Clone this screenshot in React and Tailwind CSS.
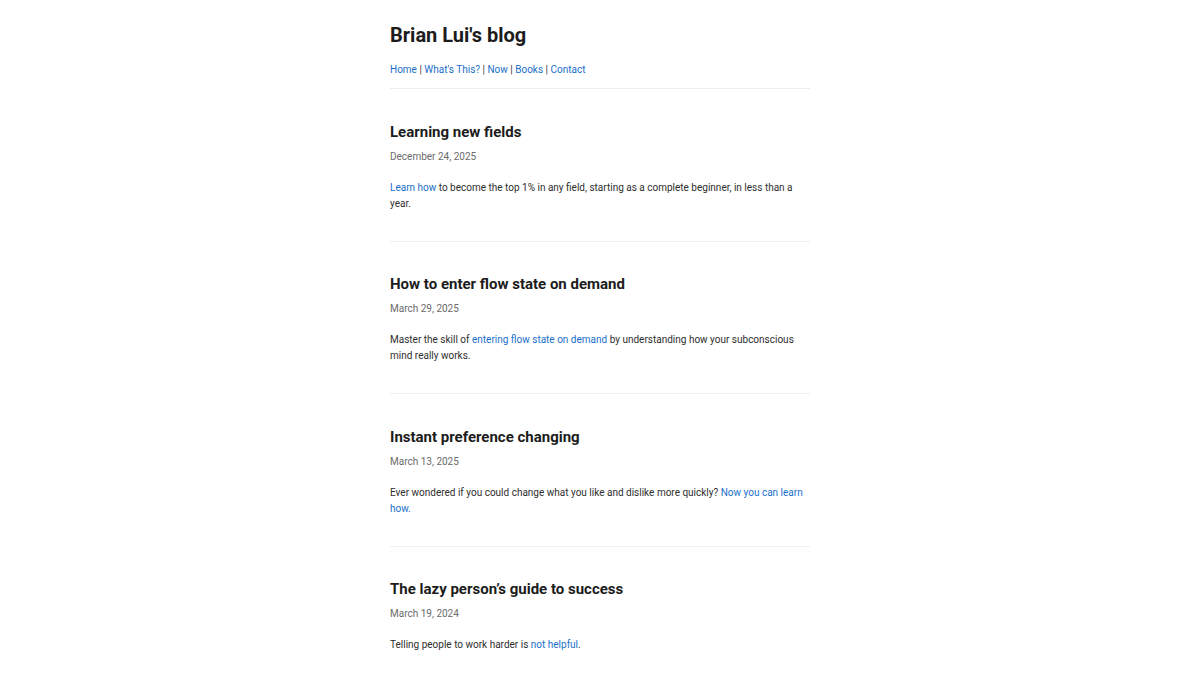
const posts = [
  {
    title: "Learning new fields",
    date: "December 24, 2025",
    body: (
      <>
        <a href="#" className="text-[#1a6fc9]">Learn how</a> to become the top 1% in any field, starting as a complete beginner, in less than a year.
      </>
    ),
  },
  {
    title: "How to enter flow state on demand",
    date: "March 29, 2025",
    body: (
      <>
        Master the skill of <a href="#" className="text-[#1a6fc9]">entering flow state on demand</a> by understanding how your subconscious mind really works.
      </>
    ),
  },
  {
    title: "Instant preference changing",
    date: "March 13, 2025",
    body: (
      <>
        Ever wondered if you could change what you like and dislike more quickly? <a href="#" className="text-[#1a6fc9]">Now you can learn how.</a>
      </>
    ),
  },
  {
    title: "The lazy person\u2019s guide to success",
    date: "March 19, 2024",
    body: (
      <>
        Telling people to work harder is <a href="#" className="text-[#1a6fc9]">not helpful</a>.
      </>
    ),
  },
];

const nav = ["Home", "What's This?", "Now", "Books", "Contact"];

export default function App() {
  return (
    <div className="min-h-screen bg-white font-['Roboto',sans-serif] text-[#1f1f1f]">
      <div className="w-[420px] mx-auto">
        {/* Header */}
        <header className="pt-[23px] pb-[10px] border-b border-[#ececec]">
          <h1 className="text-[20px] leading-[24px] font-bold text-[#1c1c1c]">Brian Lui's blog</h1>
          <nav className="mt-[15px] text-[10px] leading-[16px]">
            {nav.map((item, i) => (
              <span key={item}>
                {i > 0 && <span className="text-[#333]"> | </span>}
                <a href="#" className="text-[#1a6fc9]">{item}</a>
              </span>
            ))}
          </nav>
        </header>

        {/* Posts */}
        {posts.map((post, i) => (
          <article
            key={post.title}
            className={
              i < posts.length - 1
                ? "pt-[32.5px] pb-[29px] border-b border-[#f0f0f0]"
                : "pt-[32.5px] pb-[29px]"
            }
          >
            <h2 className="text-[15px] leading-[20px] font-bold text-[#1c1c1c]">{post.title}</h2>
            <p className="mt-[7px] text-[10px] leading-[16px] text-[#6b6b6b]">{post.date}</p>
            <p className="mt-[15px] text-[10px] leading-[16px] text-[#2e2e2e]">{post.body}</p>
          </article>
        ))}
      </div>
    </div>
  );
}
